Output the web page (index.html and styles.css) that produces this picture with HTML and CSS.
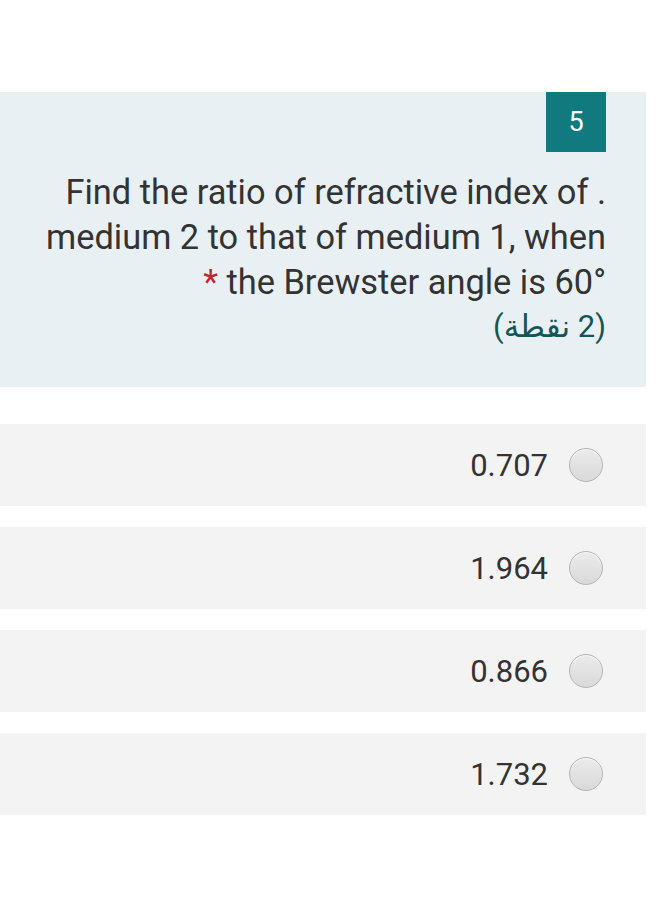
FILE: index.html
```html
<!DOCTYPE html>
<html lang="ar">
<head>
<meta charset="utf-8">
<link rel="stylesheet" href="styles.css">
</head>
<body>
<div class="page">
  <section class="question" dir="rtl">
    <div class="badge-row"><div class="badge">5</div></div>
    <div class="qtext">. Find the ratio of refractive index of medium 2 to that of medium 1, when the Brewster angle is 60° <span class="req">*</span></div>
    <div class="points">(2 نقطة)</div>
  </section>
  <div class="options" dir="rtl">
    <label class="option"><span class="radio"></span><span class="val">0.707</span></label>
    <label class="option"><span class="radio"></span><span class="val">1.964</span></label>
    <label class="option"><span class="radio"></span><span class="val">0.866</span></label>
    <label class="option"><span class="radio"></span><span class="val">1.732</span></label>
  </div>
</div>
</body>
</html>
```
FILE: styles.css
```css
html, body {
  margin: 0;
  padding: 0;
  background: #ffffff;
}
body {
  font-family: Roboto, "Liberation Sans", "DejaVu Sans", sans-serif;
  color: #333333;
}
.page {
  width: 646px;
  padding-top: 92px;
}
.question {
  background: #e8f0f3;
  padding: 0 40px 38px 40px;
}
.badge-row {
  display: flex;
  justify-content: flex-start;
}
.badge {
  width: 60px;
  height: 60px;
  background: #117a7f;
  color: #ffffff;
  font-size: 27px;
  display: flex;
  align-items: center;
  justify-content: center;
}
.qtext {
  margin-top: 18px;
  font-size: 34.4px;
  line-height: 45px;
  color: #333333;
  text-align: right;
}
.req {
  color: #c0272d;
}
.points {
  font-size: 31px;
  line-height: 44px;
  color: #125656;
  text-align: right;
  font-family: Roboto, "DejaVu Sans", sans-serif;
}
.options {
  margin-top: 37px;
  display: flex;
  flex-direction: column;
  gap: 21px;
}
.option {
  height: 82px;
  background: #f3f3f3;
  display: flex;
  align-items: center;
  padding-right: 43px;
  gap: 21px;
}
.radio {
  width: 32px;
  height: 32px;
  border-radius: 50%;
  border: 1px solid #b4b4b4;
  background: linear-gradient(#ebebeb, #d9d9d9);
  box-shadow: inset 0 1px 1px rgba(255,255,255,0.7);
  flex: none;
}
.val {
  font-size: 31px;
  color: #333333;
  line-height: 1;
}
```
